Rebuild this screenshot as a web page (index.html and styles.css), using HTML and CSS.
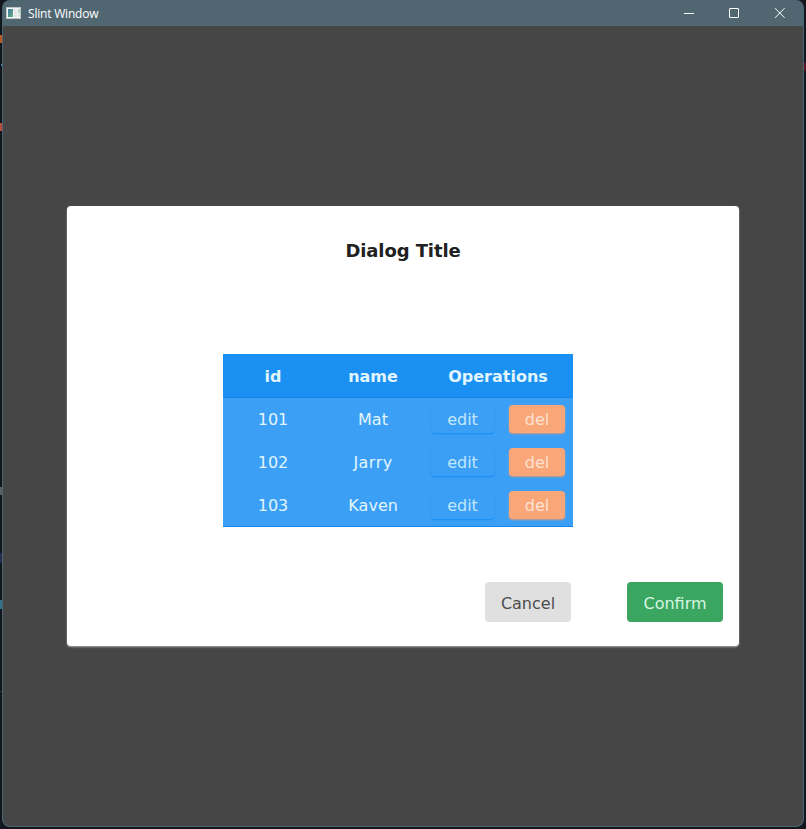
FILE: index.html
```
<!DOCTYPE html>
<html lang="en">
<head>
<meta charset="utf-8">
<title>Slint Window</title>
<link rel="stylesheet" href="styles.css">
</head>
<body>
<i class="fleck orange"></i><i class="fleck cyan"></i><i class="fleck red"></i><i class="fleck sand"></i><i class="fleck navy"></i><i class="fleck teal"></i><i class="fleck line"></i><i class="fleck crimson"></i>
<div class="window">
  <header class="titlebar">
    <svg class="app-icon" width="15" height="12" viewBox="0 0 15 12">
      <rect width="15" height="12" fill="#c2c5c7"/>
      <rect x="1" y="1" width="13" height="10" fill="#f4f5f5"/>
      <defs><linearGradient id="g" x1="0" y1="0" x2="1" y2="1"><stop offset="0" stop-color="#4478a8"/><stop offset="1" stop-color="#5fb07c"/></linearGradient></defs>
      <rect x="2" y="2" width="5" height="8" fill="url(#g)"/>
      <rect x="8" y="2" width="3" height="8" fill="#e5e7e9"/>
      <rect x="12" y="2" width="2" height="4" fill="#b5d8c4"/>
      <rect x="12" y="6" width="2" height="4" fill="#dfe6e4"/>
    </svg>
    <span class="caption">Slint Window</span>
    <div class="controls">
      <svg width="46" height="26" fill="none" stroke="#fff"><path d="M19 13.5h10"/></svg>
      <svg width="46" height="26" fill="none" stroke="#fff"><rect x="18.5" y="8.5" width="9" height="9" rx=".5"/></svg>
      <svg width="46" height="26" fill="none" stroke="#fff"><path d="M18 8.2l9.6 9.6M27.6 8.2L18 17.8"/></svg>
    </div>
  </header>
  <main class="content">
    <section class="dialog">
      <h1>Dialog Title</h1>
      <div class="table">
        <div class="row head"><span>id</span><span>name</span><span>Operations</span></div>
        <div class="row"><span>101</span><span>Mat</span><div class="ops"><button class="edit">edit</button><button class="del">del</button></div></div>
        <div class="row"><span>102</span><span class="loose">Jarry</span><div class="ops"><button class="edit">edit</button><button class="del">del</button></div></div>
        <div class="row"><span>103</span><span>Kaven</span><div class="ops"><button class="edit">edit</button><button class="del">del</button></div></div>
      </div>
      <footer><button class="cancel">Cancel</button><button class="confirm">Confirm</button></footer>
    </section>
  </main>
</div>
</body>
</html>
```
FILE: styles.css
```
* { box-sizing: border-box; }
body {
  margin: 0;
  height: 829px;
  padding: 0 1px 2px 2px;
  overflow: hidden;
  background: #12171e;
  font-family: Verdana, "DejaVu Sans", sans-serif;
}
button { border: 0; padding: 0; font: inherit; }
.window {
  display: flex;
  flex-direction: column;
  width: 802px;
  height: 827px;
  border: solid #4a6472;
  border-width: 0 1px 1px;
  border-radius: 8px;
  background: #506772;
  overflow: hidden;
}
.titlebar { display: flex; align-items: center; height: 26px; padding-left: 3px; flex: none; }
.caption { margin: 2px 0 0 7px; color: #fff; font: 12px/16px "Open Sans", sans-serif; letter-spacing: -.2px; }
.controls { display: flex; margin-left: auto; }
.content {
  flex: 1;
  padding: 180px 0 0 64px;
  background: #464646;
  border-radius: 2px 2px 7px 7px;
}
.dialog {
  display: flex;
  flex-direction: column;
  width: 672px;
  height: 440px;
  background: #fff;
  border-radius: 4px;
  box-shadow: 0 1px 2px #aaa;
}
h1 {
  margin: 32px 0 0;
  text-align: center;
  font-size: 18px;
  line-height: 26px;
  letter-spacing: -.1px;
  color: #212121;
}
.table {
  width: 350px;
  height: 173px;
  margin: 90px 0 0 156px;
  color: #e1f5fe;
  font-size: 16px;
  font-kerning: none;
  background: #3ba0f5;
  border-bottom: 1px solid #1585ec;
}
.row {
  display: grid;
  grid-template-columns: 100px 100px 150px;
  align-items: center;
  height: 43px;
  text-align: center;
}
.row:last-child { margin-bottom: -1px; }
.loose { letter-spacing: .4px; }
.head { height: 44px; padding-top: 2px; background: #1a90f3; border-bottom: 1px solid #1585ec; font-weight: bold; }
.ops { display: flex; gap: 15px; padding: 0 0 2px 8px; }
.ops button { height: 28px; padding-top: 1px; line-height: 27px; border-radius: 4px; }
.ops .edit { width: 63px; background: #3ba0f5; color: #c2e7fd; box-shadow: 0 1px 2px #158af2; }
.ops .del { width: 56px; background: #f9a678; color: #fde2d4; box-shadow: 0 1px 2px #d29780; }
footer { display: flex; gap: 56px; justify-content: flex-end; margin: 55px 16px 0 0; }
footer button { height: 40px; padding-top: 3px; line-height: 37px; border-radius: 4px; font-size: 16px; }
.cancel { width: 86px; background: #e0e0e0; color: #4d4d4d; }
.confirm { width: 96px; background: #3ba660; color: #d7f5e1; }

/* Slivers of the desktop visible beside the window */
.fleck { position: absolute; left: 0; width: 2px; }
.orange { top: 35px; height: 8px; background: #b75a20; }
.cyan { top: 64px; height: 2px; left: 1px; width: 1px; background: #3f83b0; }
.red { top: 123px; height: 8px; background: #b94a40; }
.sand { top: 487px; height: 8px; background: #59615f; }
.navy { top: 553px; height: 10px; background: #242f50; }
.teal { top: 600px; height: 9px; background: #35708a; }
.line { top: 691px; height: 1px; background: #2c3339; }
.crimson { top: 63px; height: 8px; left: 804px; background: #5d1420; }
```
